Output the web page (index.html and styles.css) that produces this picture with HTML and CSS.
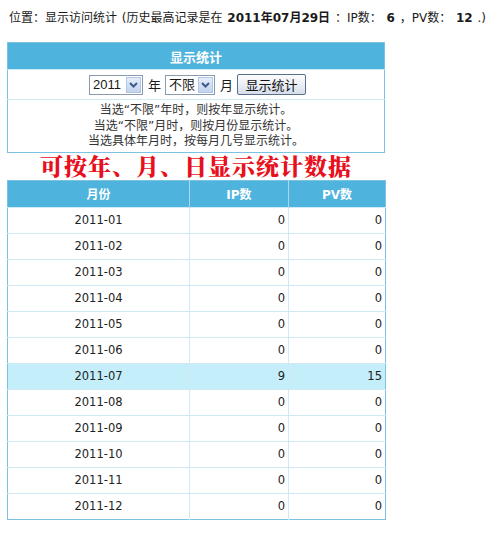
FILE: index.html
```html
<!DOCTYPE html>
<html lang="zh">
<head>
<meta charset="utf-8">
<link rel="stylesheet" href="styles.css">
</head>
<body>
<div class="crumb">位置：显示访问统计 (历史最高记录是在 <b>2011年07月29日</b> ：IP数： <b>6</b> ，PV数： <b>12</b> .)</div>

<table class="panel">
  <tr><th class="panel-head">显示统计</th></tr>
  <tr><td class="controls">
    <div class="ctl-row">
      <span class="sel sel-year">2011<span class="arrow"><svg width="9" height="6" viewBox="0 0 9 6"><path d="M1 1 L4.5 4.5 L8 1" fill="none" stroke="#3d5c8a" stroke-width="2"/></svg></span></span>
      <span class="unit">年</span>
      <span class="sel sel-month">不限<span class="arrow"><svg width="9" height="6" viewBox="0 0 9 6"><path d="M1 1 L4.5 4.5 L8 1" fill="none" stroke="#3d5c8a" stroke-width="2"/></svg></span></span>
      <span class="unit">月</span>
      <button class="btn">显示统计</button>
    </div>
  </td></tr>
  <tr><td class="notes">
    <div>当选“不限”年时，则按年显示统计。</div>
    <div>当选“不限”月时，则按月份显示统计。</div>
    <div>当选具体年月时，按每月几号显示统计。</div>
  </td></tr>
</table>

<div class="banner">可按年、月、日显示统计数据</div>

<table class="stats">
  <thead>
    <tr><th class="c1">月份</th><th class="c2">IP数</th><th class="c3">PV数</th></tr>
  </thead>
  <tbody>
    <tr><td>2011-01</td><td>0</td><td>0</td></tr>
    <tr><td>2011-02</td><td>0</td><td>0</td></tr>
    <tr><td>2011-03</td><td>0</td><td>0</td></tr>
    <tr><td>2011-04</td><td>0</td><td>0</td></tr>
    <tr><td>2011-05</td><td>0</td><td>0</td></tr>
    <tr><td>2011-06</td><td>0</td><td>0</td></tr>
    <tr class="hl"><td>2011-07</td><td>9</td><td>15</td></tr>
    <tr><td>2011-08</td><td>0</td><td>0</td></tr>
    <tr><td>2011-09</td><td>0</td><td>0</td></tr>
    <tr><td>2011-10</td><td>0</td><td>0</td></tr>
    <tr><td>2011-11</td><td>0</td><td>0</td></tr>
    <tr><td>2011-12</td><td>0</td><td>0</td></tr>
  </tbody>
</table>
</body>
</html>
```

FILE: styles.css
```css
body {
  margin: 0;
  padding: 10px 0 0 7px;
  background: #fff;
  font-family: "DejaVu Sans", "Noto Sans CJK SC", sans-serif;
  font-size: 12px;
  color: #1a1a1a;
}
.crumb {
  margin-left: 2px;
  height: 16px;
  line-height: 16px;
  font-size: 12px;
  white-space: nowrap;
  word-spacing: 1px;
}
.crumb b { font-weight: bold; }

.panel {
  margin-top: 16px;
  width: 378px;
  border-collapse: collapse;
  border: 1px solid #7cc3e3;
}
.panel-head {
  background: #4eb3dd;
  color: #fff;
  height: 26px;
  padding: 0;
  font-weight: bold;
  font-size: 13px;
  border-bottom: 1px solid #cfe9f5;
}
.controls {
  height: 29px;
  padding: 0;
  border-bottom: 1px solid #cfe9f5;
  font-size: 12px;
}
.ctl-row {
  display: flex;
  justify-content: center;
  align-items: center;
  gap: 5px;
  padding-left: 3px;
}
.sel {
  display: inline-flex;
  align-items: center;
  height: 18px;
  border: 1px solid #8a9bb0;
  padding-left: 3px;
  background: #fff;
  font-family: "Liberation Sans", "Noto Sans CJK SC", sans-serif;
  font-size: 13px;
  line-height: 18px;
  box-sizing: content-box;
}
.sel-year { width: 49px; }
.sel-month { width: 45px; }
.sel .arrow {
  margin-left: auto;
  width: 15px;
  height: 16px;
  margin-right: 1px;
  display: flex;
  align-items: center;
  justify-content: center;
  background: linear-gradient(#e5edf9, #c3d3ee);
  border: 1px solid #b4c6e6;
  box-sizing: border-box;
}
.unit {
  font-size: 13px;
  width: 12px;
  text-align: center;
}
.btn {
  height: 21px;
  width: 69px;
  padding: 0;
  border: 1px solid #5b6f8d;
  border-radius: 2px;
  background: linear-gradient(#fbfcfd, #e7ecf3 60%, #d5dde9);
  font-family: "Noto Sans CJK SC", sans-serif;
  font-size: 13px;
  color: #111;
}
.notes {
  text-align: center;
  padding: 3px 0 2px;
  color: #333;
  font-size: 12px;
  line-height: 15.5px;
}

.banner {
  width: 378px;
  text-align: center;
  color: #e8101c;
  font-family: "Noto Serif CJK SC", "Noto Sans CJK SC", serif;
  font-weight: 900;
  font-size: 23px;
  letter-spacing: 1px;
  height: 27px;
  line-height: 26px;
  margin: 0;
}

.stats {
  width: 379px;
  border-collapse: collapse;
  border: 1px solid #7cc3e3;
  font-size: 12px;
}
.stats th {
  background: #4eb3dd;
  color: #fff;
  font-weight: bold;
  height: 26px;
  padding: 0;
  border-left: 1px solid #a8d8ee;
}
.stats th.c1 { width: 181px; border-left: none; }
.stats th.c2 { width: 98px; }
.stats td {
  height: 25px;
  padding: 0 3px;
  border-top: 1px solid #cfe9f5;
  border-left: 1px solid #cfe9f5;
  text-align: right;
  font-size: 11.5px;
  color: #222;
}
.stats td:first-child {
  text-align: center;
  border-left: none;
}
.stats tr.hl td { background: #c5eefb; }
```
